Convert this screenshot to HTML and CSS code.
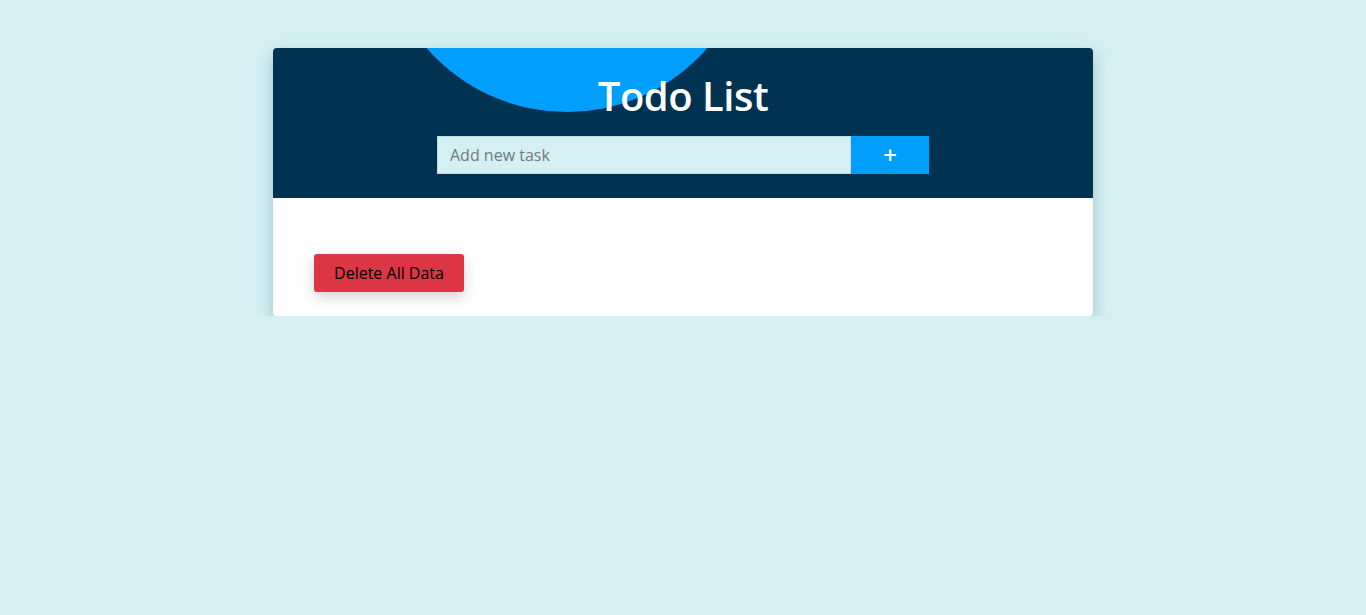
FILE: index.html
```html
<!DOCTYPE html>
<html lang="en">
<head>
<meta charset="utf-8">
<title>Todo List</title>
<link rel="stylesheet" href="styles.css">
</head>
<body>
  <main class="card">
    <header class="card-header">
      <span class="blob"></span>
      <h1 class="title">Todo List</h1>
      <form class="add-form">
        <input class="task-input" type="text" placeholder="Add new task">
        <button class="add-btn" type="button">+</button>
      </form>
    </header>
    <section class="card-body">
      <ul class="task-list"></ul>
      <button class="delete-btn" type="button">Delete All Data</button>
    </section>
  </main>
</body>
</html>
```

FILE: styles.css
```css
* { box-sizing: border-box; }

html, body {
  margin: 0;
  padding: 0;
  background: #d4f0f3;
  font-family: "Open Sans", "Noto Sans", sans-serif;
}

body {
  padding-top: 48px;
}

.card {
  width: 820px;
  margin: 0 auto;
  background: #ffffff;
  border-radius: 4px;
  overflow: hidden;
  box-shadow: 0 6px 16px rgba(0, 60, 80, 0.25);
}

.card-header {
  position: relative;
  height: 150px;
  background: #003352;
  overflow: hidden;
  display: flex;
  flex-direction: column;
  align-items: center;
  padding-top: 23px;
}

.blob {
  position: absolute;
  left: 108px;
  top: -308px;
  width: 372px;
  height: 372px;
  border-radius: 50%;
  background: #009ffd;
}

.title {
  position: relative;
  margin: 0;
  color: #ffffff;
  font-size: 40px;
  font-weight: 600;
  line-height: 50px;
  letter-spacing: -0.5px;
}

.add-form {
  position: relative;
  display: flex;
  margin-top: 15px;
}

.task-input {
  width: 414px;
  height: 38px;
  margin: 0;
  padding: 0 12px;
  border: 1px solid #c3dadf;
  border-radius: 0;
  background: #d4f0f3;
  font-family: inherit;
  font-size: 16px;
  color: #333;
  outline: none;
}

.task-input::placeholder {
  color: #6e7a80;
}

.add-btn {
  width: 78px;
  height: 38px;
  margin: 0;
  border: none;
  border-radius: 0;
  background: #009ffd;
  color: #ffffff;
  font-family: inherit;
  font-size: 24px;
  font-weight: 600;
  line-height: 38px;
  padding: 0;
}

.card-body {
  padding: 56px 41px 24px;
}

.task-list {
  margin: 0;
  padding: 0;
  list-style: none;
}

.delete-btn {
  display: block;
  width: 150px;
  height: 38px;
  padding: 0;
  border: none;
  border-radius: 3px;
  background: #dc3545;
  color: #000000;
  font-family: inherit;
  font-size: 16px;
  box-shadow: 0 5px 14px rgba(0, 0, 0, 0.18);
}
```
